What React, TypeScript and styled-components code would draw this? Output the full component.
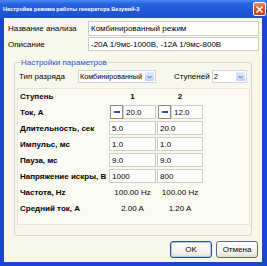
import React from "react";
import styled, { createGlobalStyle } from "styled-components";

const GlobalStyle = createGlobalStyle`
  html, body { margin: 0; padding: 0; background: #ffffff; }
  body { font-family: "Liberation Sans", Arial, sans-serif; }
  * { box-sizing: border-box; }
`;

const Window = styled.div`
  width: 267px;
  height: 266px;
  display: flex;
  flex-direction: column;
  overflow: hidden;
  background: #1747cf;
`;

const TitleBar = styled.div`
  height: 18px;
  flex: none;
  display: flex;
  align-items: center;
  justify-content: space-between;
  padding: 0 1px 0 3px;
  background: linear-gradient(180deg, #4a8cf5 0%, #2563e0 22%, #1d58d8 60%, #1a50cc 100%);
  color: #ffffff;
  font-weight: bold;
  font-size: 5.6px;
  white-space: nowrap;
`;

const CloseButton = styled.div`
  width: 13px;
  height: 14px;
  border: 1px solid #ffffff;
  border-radius: 2px;
  background: linear-gradient(180deg, #f08a6a 0%, #e0532b 45%, #c8401d 100%);
  display: flex;
  align-items: center;
  justify-content: center;
`;

const Frame = styled.div`
  flex: 1;
  display: flex;
  padding: 0 5px 4px 4px;
`;

const Body = styled.div`
  flex: 1;
  display: flex;
  flex-direction: column;
  background: #f8f7ec;
  padding: 3px 3px 4px 4px;
  font-size: 8px;
  color: #000000;
`;

const FieldGrid = styled.div`
  display: grid;
  grid-template-columns: 80px 1fr;
  row-gap: 1px;
  align-items: center;
`;

const Label = styled.span<{ $w?: number; $ml?: number }>`
  font-size: 8px;
  white-space: nowrap;
  ${(p) => (p.$w ? `width: ${p.$w}px; flex: none;` : "")}
  ${(p) => (p.$ml ? `margin-left: ${p.$ml}px;` : "")}
`;

const TextBox = styled.input<{ $h?: number }>`
  width: 100%;
  height: ${(p) => p.$h ?? 14}px;
  border: 1px solid #cfcec2;
  background: #ffffff;
  font-family: "Liberation Sans", Arial, sans-serif;
  font-size: 8px;
  color: #000000;
  padding: 0 2px;
  margin: 0;
  outline: none;
`;

const GroupBox = styled.fieldset`
  margin: 7px 7px 0 6px;
  padding: 3px 1px 0 2px;
  border: 1px solid #d8d7c5;
  border-radius: 3px;
  height: 178px;
  min-width: 0;
`;

const Legend = styled.legend`
  color: #1c4fc6;
  font-size: 8px;
  padding: 0 1px;
  margin-left: 3px;
`;

const TypeRow = styled.div`
  display: flex;
  align-items: center;
  height: 13px;
  padding-left: 2px;
`;

const Select = styled.div<{ $w: number }>`
  width: ${(p) => p.$w}px;
  height: 13px;
  flex: none;
  display: flex;
  align-items: center;
  justify-content: space-between;
  background: #ffffff;
  border: 1px solid #c9d4e6;
  padding: 0 1px 0 1px;
  overflow: hidden;
`;

const SelectText = styled.span`
  flex: 1;
  min-width: 0;
  white-space: nowrap;
  font-size: 7.2px;
`;

const ArrowBox = styled.div`
  width: 9px;
  height: 9px;
  flex: none;
  border-radius: 1px;
  background: linear-gradient(180deg, #e3ebfd 0%, #bcd0f8 100%);
  display: flex;
  align-items: center;
  justify-content: center;
`;

const Panel = styled.div`
  margin-top: 5px;
  height: 137px;
  border: 1px solid #e6e5d6;
  background: #fbfaf2;
  padding-left: 2px;
  display: grid;
  grid-template-columns: 88px 47px 46px;
  grid-template-rows: 14px repeat(7, 14px);
  column-gap: 1px;
  row-gap: 2px;
  align-items: center;
`;

const RowLabel = styled.span`
  font-weight: bold;
  font-size: 8px;
  white-space: nowrap;
`;

const ColHead = styled.span`
  font-weight: bold;
  font-size: 8px;
  text-align: center;
`;

const Value = styled.span`
  font-size: 8px;
  text-align: center;
  white-space: nowrap;
`;

const Pair = styled.div`
  display: flex;
  height: 14px;
  padding-left: 1px;
`;

const MinusButton = styled.div`
  width: 13px;
  height: 14px;
  flex: none;
  border: 1px solid #8d8d86;
  background: #ffffff;
  display: flex;
  align-items: center;
  justify-content: center;
  &::before {
    content: "";
    width: 6px;
    height: 2px;
    background: #2447c6;
  }
`;

const ButtonRow = styled.div`
  margin-top: auto;
  display: flex;
  justify-content: flex-end;
  gap: 4px;
  padding-right: 1px;
`;

const Button = styled.div<{ $default?: boolean }>`
  width: 42px;
  height: 17px;
  border: 1px solid ${(p) => (p.$default ? "#2a4a8a" : "#5d6b80")};
  border-radius: 3px;
  background: linear-gradient(180deg, #ffffff 0%, #f3f2ec 70%, #dedbd0 100%);
  box-shadow: ${(p) => (p.$default ? "inset 0 0 0 1px #b6cdf5" : "none")};
  display: flex;
  align-items: center;
  justify-content: center;
  font-size: 8px;
`;

const Chevron = () => (
  <svg width="5" height="4" viewBox="0 0 5 4">
    <path d="M0.5 1 L2.5 3 L4.5 1" fill="none" stroke="#4d6185" strokeWidth="1" />
  </svg>
);

const rows: { label: string; a: string; b: string }[] = [
  { label: "Длительность, сек", a: "5.0", b: "20.0" },
  { label: "Импульс, мс", a: "1.0", b: "1.0" },
  { label: "Пауза, мс", a: "9.0", b: "9.0" },
  { label: "Напряжение искры, В", a: "1000", b: "800" },
];

export default function App() {
  return (
    <>
      <GlobalStyle />
      <Window>
        <TitleBar>
          <span>Настройка режима работы генератора Везувий-3</span>
          <CloseButton>
            <svg width="9" height="9" viewBox="0 0 9 9">
              <path d="M1.5 1.5 L7.5 7.5 M7.5 1.5 L1.5 7.5" stroke="#ffffff" strokeWidth="1.6" />
            </svg>
          </CloseButton>
        </TitleBar>
        <Frame>
          <Body>
            <FieldGrid>
              <Label>Название анализа</Label>
              <TextBox $h={15} readOnly value="Комбинированный режим" />
              <Label>Описание</Label>
              <TextBox $h={14} readOnly value="-20A 1/9мс-1000B, -12A 1/9мс-800B" />
            </FieldGrid>
            <GroupBox>
              <Legend>Настройки параметров</Legend>
              <TypeRow>
                <Label $w={59}>Тип разряда</Label>
                <Select $w={78}>
                  <SelectText>Комбинированный</SelectText>
                  <ArrowBox>
                    <Chevron />
                  </ArrowBox>
                </Select>
                <Label $w={38} $ml={18}>Ступеней</Label>
                <Select $w={35}>
                  <SelectText>2</SelectText>
                  <ArrowBox>
                    <Chevron />
                  </ArrowBox>
                </Select>
              </TypeRow>
              <Panel>
                <RowLabel>Ступень</RowLabel>
                <ColHead>1</ColHead>
                <ColHead>2</ColHead>

                <RowLabel>Ток, А</RowLabel>
                <Pair>
                  <MinusButton />
                  <TextBox readOnly value="20.0" />
                </Pair>
                <Pair>
                  <MinusButton />
                  <TextBox readOnly value="12.0" />
                </Pair>

                {rows.map((r) => (
                  <React.Fragment key={r.label}>
                    <RowLabel>{r.label}</RowLabel>
                    <TextBox readOnly value={r.a} />
                    <TextBox readOnly value={r.b} />
                  </React.Fragment>
                ))}

                <RowLabel>Частота, Hz</RowLabel>
                <Value>100.00 Hz</Value>
                <Value>100.00 Hz</Value>

                <RowLabel>Средний ток, А</RowLabel>
                <Value>2.00 A</Value>
                <Value>1.20 A</Value>
              </Panel>
            </GroupBox>
            <ButtonRow>
              <Button $default>OK</Button>
              <Button>Отмена</Button>
            </ButtonRow>
          </Body>
        </Frame>
      </Window>
    </>
  );
}
